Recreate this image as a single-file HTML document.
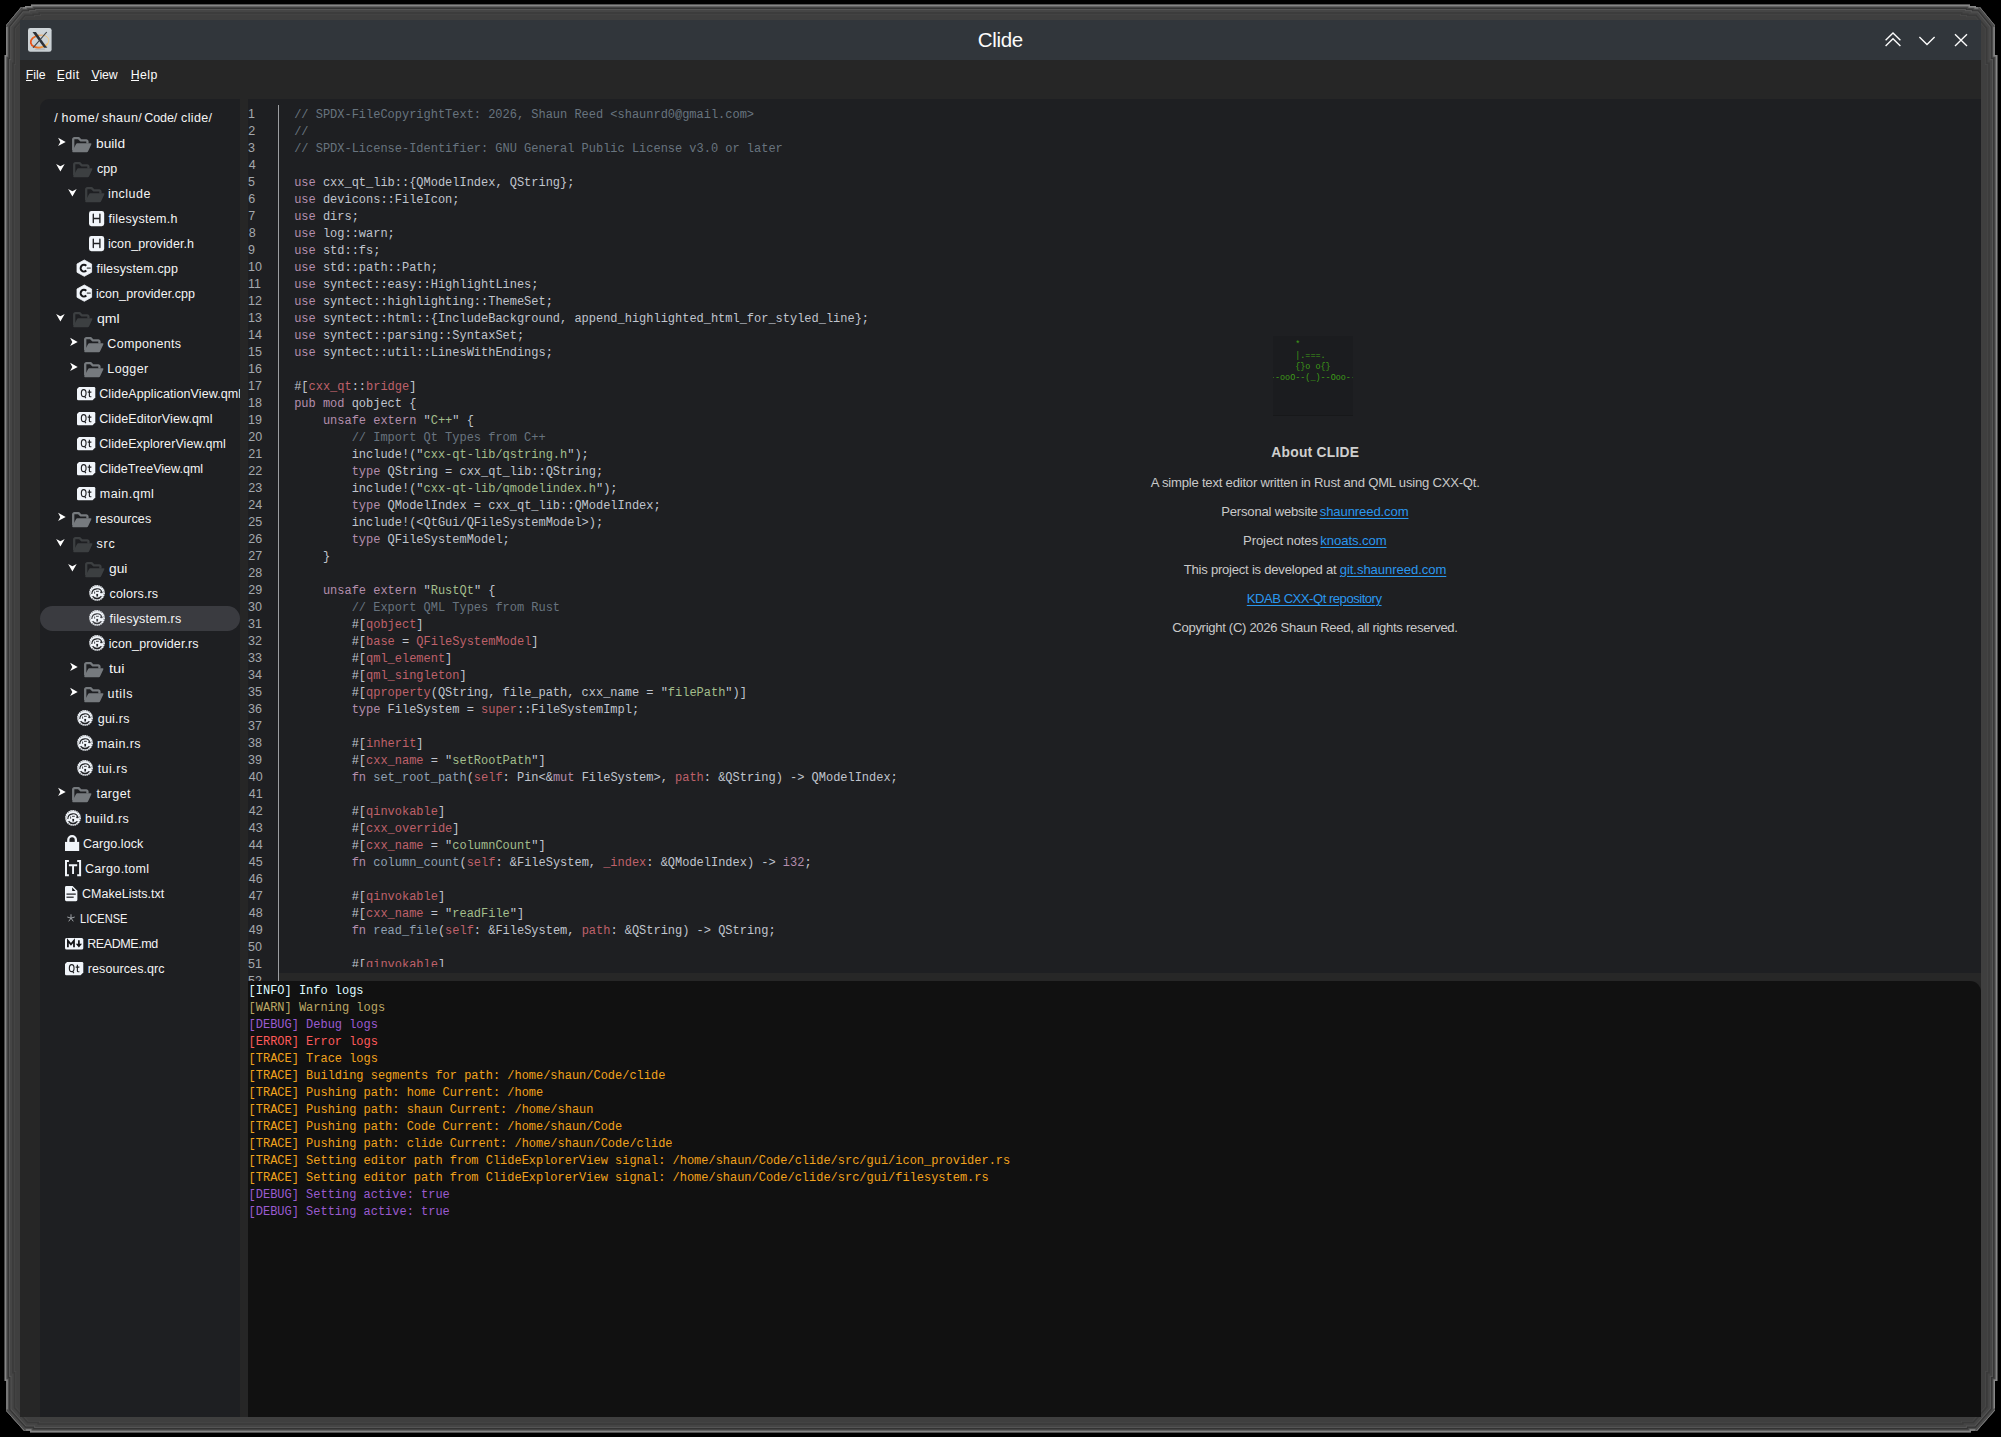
<!DOCTYPE html><html><head><meta charset="utf-8"><title>Clide</title><style>

html,body{margin:0;padding:0;background:#000;}
body{width:2001px;height:1437px;overflow:hidden;position:relative;font-family:"Liberation Sans",sans-serif;}
.t{position:absolute;white-space:pre;margin:0;padding:0;}
.s{font-family:"Liberation Sans",sans-serif;}
.m{font-family:"Liberation Mono",monospace;}
svg{position:absolute;overflow:visible;}
.k{color:#b48ead}.c{color:#68747f}.r{color:#bf616a}.g{color:#a3be8c}.f{color:#8fa1b3}
a{color:inherit}

</style></head><body>
<svg style="left:0;top:0" width="2001" height="1437" viewBox="0 0 2001 1437">
<defs><clipPath id="fc"><polygon points="31,4.8 1970,4.8 1970,6 1976,6 1976,7.2 1980,7.2 1994.8,25.2 1994.8,55 1997.2,55 1997.2,1381 1995,1381 1995,1410.2 1977,1430.7 1971,1430.7 1971,1432.2 30,1432.2 30,1430.7 24,1430.7 6.3,1411 6.3,1381 4.8,1381 4.8,55 6.1,55 6.1,25.2 21,7.2 25,7.2 25,6 31,6"/></clipPath></defs>
<g clip-path="url(#fc)"><polygon points="31,4.8 1970,4.8 1970,6 1976,6 1976,7.2 1980,7.2 1994.8,25.2 1994.8,55 1997.2,55 1997.2,1381 1995,1381 1995,1410.2 1977,1430.7 1971,1430.7 1971,1432.2 30,1432.2 30,1430.7 24,1430.7 6.3,1411 6.3,1381 4.8,1381 4.8,55 6.1,55 6.1,25.2 21,7.2 25,7.2 25,6 31,6" fill="#3f3f3f"/><polygon points="31,4.8 1970,4.8 1970,6 1976,6 1976,7.2 1980,7.2 1994.8,25.2 1994.8,55 1997.2,55 1997.2,1381 1995,1381 1995,1410.2 1977,1430.7 1971,1430.7 1971,1432.2 30,1432.2 30,1430.7 24,1430.7 6.3,1411 6.3,1381 4.8,1381 4.8,55 6.1,55 6.1,25.2 21,7.2 25,7.2 25,6 31,6" fill="none" stroke="#464646" stroke-width="20" stroke-linejoin="miter"/><polygon points="31,4.8 1970,4.8 1970,6 1976,6 1976,7.2 1980,7.2 1994.8,25.2 1994.8,55 1997.2,55 1997.2,1381 1995,1381 1995,1410.2 1977,1430.7 1971,1430.7 1971,1432.2 30,1432.2 30,1430.7 24,1430.7 6.3,1411 6.3,1381 4.8,1381 4.8,55 6.1,55 6.1,25.2 21,7.2 25,7.2 25,6 31,6" fill="none" stroke="#3a3a3a" stroke-width="18" stroke-linejoin="miter"/><polygon points="31,4.8 1970,4.8 1970,6 1976,6 1976,7.2 1980,7.2 1994.8,25.2 1994.8,55 1997.2,55 1997.2,1381 1995,1381 1995,1410.2 1977,1430.7 1971,1430.7 1971,1432.2 30,1432.2 30,1430.7 24,1430.7 6.3,1411 6.3,1381 4.8,1381 4.8,55 6.1,55 6.1,25.2 21,7.2 25,7.2 25,6 31,6" fill="none" stroke="#454545" stroke-width="14.8" stroke-linejoin="miter"/><polygon points="31,4.8 1970,4.8 1970,6 1976,6 1976,7.2 1980,7.2 1994.8,25.2 1994.8,55 1997.2,55 1997.2,1381 1995,1381 1995,1410.2 1977,1430.7 1971,1430.7 1971,1432.2 30,1432.2 30,1430.7 24,1430.7 6.3,1411 6.3,1381 4.8,1381 4.8,55 6.1,55 6.1,25.2 21,7.2 25,7.2 25,6 31,6" fill="none" stroke="#545454" stroke-width="10.4" stroke-linejoin="miter"/><polygon points="31,4.8 1970,4.8 1970,6 1976,6 1976,7.2 1980,7.2 1994.8,25.2 1994.8,55 1997.2,55 1997.2,1381 1995,1381 1995,1410.2 1977,1430.7 1971,1430.7 1971,1432.2 30,1432.2 30,1430.7 24,1430.7 6.3,1411 6.3,1381 4.8,1381 4.8,55 6.1,55 6.1,25.2 21,7.2 25,7.2 25,6 31,6" fill="none" stroke="#333333" stroke-width="8.2" stroke-linejoin="miter"/><polygon points="31,4.8 1970,4.8 1970,6 1976,6 1976,7.2 1980,7.2 1994.8,25.2 1994.8,55 1997.2,55 1997.2,1381 1995,1381 1995,1410.2 1977,1430.7 1971,1430.7 1971,1432.2 30,1432.2 30,1430.7 24,1430.7 6.3,1411 6.3,1381 4.8,1381 4.8,55 6.1,55 6.1,25.2 21,7.2 25,7.2 25,6 31,6" fill="none" stroke="#3f3f3f" stroke-width="6.6" stroke-linejoin="miter"/><polygon points="31,4.8 1970,4.8 1970,6 1976,6 1976,7.2 1980,7.2 1994.8,25.2 1994.8,55 1997.2,55 1997.2,1381 1995,1381 1995,1410.2 1977,1430.7 1971,1430.7 1971,1432.2 30,1432.2 30,1430.7 24,1430.7 6.3,1411 6.3,1381 4.8,1381 4.8,55 6.1,55 6.1,25.2 21,7.2 25,7.2 25,6 31,6" fill="none" stroke="#4b4b4b" stroke-width="5.2" stroke-linejoin="miter"/><polygon points="31,4.8 1970,4.8 1970,6 1976,6 1976,7.2 1980,7.2 1994.8,25.2 1994.8,55 1997.2,55 1997.2,1381 1995,1381 1995,1410.2 1977,1430.7 1971,1430.7 1971,1432.2 30,1432.2 30,1430.7 24,1430.7 6.3,1411 6.3,1381 4.8,1381 4.8,55 6.1,55 6.1,25.2 21,7.2 25,7.2 25,6 31,6" fill="none" stroke="#585858" stroke-width="4" stroke-linejoin="miter"/><polygon points="31,4.8 1970,4.8 1970,6 1976,6 1976,7.2 1980,7.2 1994.8,25.2 1994.8,55 1997.2,55 1997.2,1381 1995,1381 1995,1410.2 1977,1430.7 1971,1430.7 1971,1432.2 30,1432.2 30,1430.7 24,1430.7 6.3,1411 6.3,1381 4.8,1381 4.8,55 6.1,55 6.1,25.2 21,7.2 25,7.2 25,6 31,6" fill="none" stroke="#868686" stroke-width="2.8" stroke-linejoin="miter"/><path d="M6.43 26.77 L22.60 7.23" stroke="#4a4a4a" stroke-width="1.5" fill="none"/><path d="M1978.40 7.22 L1994.47 26.77" stroke="#4a4a4a" stroke-width="1.5" fill="none"/><path d="M1994.72 1408.62 L1975.40 1430.63" stroke="#4a4a4a" stroke-width="1.5" fill="none"/><path d="M25.60 1430.61 L6.56 1409.42" stroke="#4a4a4a" stroke-width="1.5" fill="none"/></g>
</svg>
<div style="position:absolute;left:20px;top:20px;width:1961px;height:40px;background:#31363b;"></div>
<div style="position:absolute;left:20px;top:60px;width:1961px;height:1357px;background:#262626;"></div>
<div style="position:absolute;left:40px;top:99px;width:200px;height:1318px;background:#1e1f22;border-top-left-radius:9px;"></div>
<div style="position:absolute;left:248px;top:99px;width:1733px;height:882px;background:#1e1f22;"></div>
<div style="position:absolute;left:279.4px;top:973px;width:1701.6px;height:8px;background:#272727;"></div>
<div style="position:absolute;left:248px;top:981px;width:1733px;height:436px;background:#111111;border-top-right-radius:11px;"></div>
<div style="position:absolute;left:277.9px;top:105px;width:1.3px;height:876px;background:#9c9ea1;"></div>
<svg style="left:28.2px;top:28.1px" width="23.6" height="23.8" viewBox="0 0 23.6 23.8">
<defs><linearGradient id="og" x1="0" y1="0" x2="1" y2="0"><stop offset="0" stop-color="#e84e18"/><stop offset="0.5" stop-color="#f0882e"/><stop offset="1" stop-color="#f6cc7a"/></linearGradient>
<linearGradient id="ib" x1="0" y1="0" x2="0" y2="1"><stop offset="0" stop-color="#cfd6da"/><stop offset="1" stop-color="#c7ced2"/></linearGradient></defs>
<rect x="0" y="0" width="23.6" height="23.8" rx="2.3" fill="url(#ib)"/>
<ellipse cx="12" cy="21.2" rx="5.2" ry="0.9" fill="#9aa0a4" opacity=".45"/>
<g transform="rotate(-10 11.8 13.3)">
<ellipse cx="11.8" cy="13.3" rx="9.2" ry="6.1" fill="none" stroke="url(#og)" stroke-width="0.8"/>
<path d="M11.8 7.2 A9.2 6.1 0 0 0 11.8 19.4 A9.2 6.1 0 0 0 19.6 16.5" fill="none" stroke="url(#og)" stroke-width="1.7"/>
</g>
<path d="M4.5 4.1 L7.9 4.1 L18.9 19.5 L15.9 19.5z" fill="#2d3136"/>
<path d="M15.9 19.5 L18.9 19.5 L19.4 19.0 L17.0 18.6z" fill="#2d3136"/>
<path d="M18.3 3.8 L19.2 4.3 L5.6 19.9 L4.6 19.4z" fill="#3a3f44"/>
</svg>
<div class="t s" id="t0" style="left:977.74px;top:24.00px;font-size:20.5px;line-height:31px;color:#fcfcfc;letter-spacing:-0.314px;">Clide</div>
<svg style="left:1880px;top:26px" width="96" height="28" viewBox="1880 26 96 28" fill="none" stroke="#fcfcfc" stroke-width="1.35" stroke-linecap="butt" stroke-linejoin="miter">
<path d="M1885.6 40.3 L1893 32.9 L1900.4 40.3"/>
<path d="M1885.6 46.1 L1893 38.7 L1900.4 46.1"/>
<path d="M1919.4 36.9 L1927 44.5 L1934.6 36.9"/>
<path d="M1955 34.3 L1967 46.1 M1967 34.3 L1955 46.1"/>
</svg>
<div class="t s" id="t1" style="left:25.63px;top:66.00px;font-size:12.3px;line-height:18px;color:#fcfcfc;letter-spacing:0.042px;">File</div>
<div style="position:absolute;left:26px;top:80.2px;width:6px;height:1px;background:#fcfcfc;"></div>
<div class="t s" id="t2" style="left:56.63px;top:66.00px;font-size:12.3px;line-height:18px;color:#fcfcfc;letter-spacing:0.435px;">Edit</div>
<div style="position:absolute;left:57px;top:80.2px;width:6.6px;height:1px;background:#fcfcfc;"></div>
<div class="t s" id="t3" style="left:91.56px;top:66.00px;font-size:12.3px;line-height:18px;color:#fcfcfc;letter-spacing:-0.076px;">View</div>
<div style="position:absolute;left:91.2px;top:80.2px;width:7.2px;height:1px;background:#fcfcfc;"></div>
<div class="t s" id="t4" style="left:130.63px;top:66.00px;font-size:12.3px;line-height:18px;color:#fcfcfc;letter-spacing:0.508px;">Help</div>
<div style="position:absolute;left:131px;top:80.2px;width:8.4px;height:1px;background:#fcfcfc;"></div>
<div style="position:absolute;left:40px;top:605.6px;width:200px;height:25.2px;background:#3a3b40;border-radius:12.6px;"></div>
<div class="t s" id="t5" style="left:54.23px;top:109.00px;font-size:12.5px;line-height:19px;color:#f4f4f4;">/</div>
<div class="t s" id="t6" style="left:61.57px;top:109.00px;font-size:12.5px;line-height:19px;color:#f4f4f4;letter-spacing:0.592px;">home/</div>
<div class="t s" id="t7" style="left:101.99px;top:109.00px;font-size:12.5px;line-height:19px;color:#f4f4f4;letter-spacing:0.452px;">shaun/</div>
<div class="t s" id="t8" style="left:144.35px;top:109.00px;font-size:12.5px;line-height:19px;color:#f4f4f4;letter-spacing:-0.100px;">Code/</div>
<div class="t s" id="t9" style="left:181.10px;top:109.00px;font-size:12.5px;line-height:19px;color:#f4f4f4;letter-spacing:0.349px;">clide/</div>
<div style="position:absolute;left:40px;top:99px;width:200px;height:1318px;overflow:hidden">
<div style="position:absolute;left:-40px;top:-99px;width:400px;height:1437px">
<svg style="left:57.5px;top:137.2px" width="9" height="10" viewBox="0 0 9 10"><path d="M0.1 0.7 L7.7 4.9 L0.1 9.1 L2.3 4.9z" fill="#fff"/></svg>
<svg style="left:71.9px;top:136.5px" width="19.6" height="15.3" viewBox="0 0 19.6 15.3"><path d="M1.2 13.6 V2.3 a1.15 1.15 0 0 1 1.15 -1.15 H6.6 L8.9 3.45 H14.3 a1.15 1.15 0 0 1 1.15 1.15 V6.4" fill="none" stroke="#767a7e" stroke-width="2.3" stroke-linejoin="round"/><path d="M5.3 6.3 H18.5 a.9 .9 0 0 1 .8 1.3 L16 14.4 a1.4 1.4 0 0 1 -1.2 .8 H1.2 a.9 .9 0 0 1 -.8 -1.3 L4.1 7.1 a1.4 1.4 0 0 1 1.2 -.8z" fill="#767a7e"/></svg>
<div class="t s" id="t10" style="left:96.12px;top:135.00px;font-size:12.5px;line-height:19px;color:#f4f4f4;transform:scaleX(1.0987);transform-origin:0 0;">build</div>
<svg style="left:56.4px;top:162.5px" width="10" height="10" viewBox="0 0 10 10"><path d="M0.1 1.0 L4.4 3.3 L8.7 1.0 L4.4 8.4z" fill="#fff"/></svg>
<svg style="left:72.9px;top:161.5px" width="19.6" height="15.3" viewBox="0 0 19.6 15.3"><path d="M1.2 13.6 V2.3 a1.15 1.15 0 0 1 1.15 -1.15 H6.6 L8.9 3.45 H14.3 a1.15 1.15 0 0 1 1.15 1.15 V6.4" fill="none" stroke="#3c3f41" stroke-width="2.3" stroke-linejoin="round"/><path d="M5.3 6.3 H18.5 a.9 .9 0 0 1 .8 1.3 L16 14.4 a1.4 1.4 0 0 1 -1.2 .8 H1.2 a.9 .9 0 0 1 -.8 -1.3 L4.1 7.1 a1.4 1.4 0 0 1 1.2 -.8z" fill="#3c3f41"/></svg>
<div class="t s" id="t11" style="left:96.98px;top:160.00px;font-size:12.5px;line-height:19px;color:#f4f4f4;letter-spacing:0.043px;">cpp</div>
<svg style="left:68.4px;top:187.5px" width="10" height="10" viewBox="0 0 10 10"><path d="M0.1 1.0 L4.4 3.3 L8.7 1.0 L4.4 8.4z" fill="#fff"/></svg>
<svg style="left:84.9px;top:186.5px" width="19.6" height="15.3" viewBox="0 0 19.6 15.3"><path d="M1.2 13.6 V2.3 a1.15 1.15 0 0 1 1.15 -1.15 H6.6 L8.9 3.45 H14.3 a1.15 1.15 0 0 1 1.15 1.15 V6.4" fill="none" stroke="#3c3f41" stroke-width="2.3" stroke-linejoin="round"/><path d="M5.3 6.3 H18.5 a.9 .9 0 0 1 .8 1.3 L16 14.4 a1.4 1.4 0 0 1 -1.2 .8 H1.2 a.9 .9 0 0 1 -.8 -1.3 L4.1 7.1 a1.4 1.4 0 0 1 1.2 -.8z" fill="#3c3f41"/></svg>
<div class="t s" id="t12" style="left:107.90px;top:185.00px;font-size:12.5px;line-height:19px;color:#f4f4f4;letter-spacing:0.492px;">include</div>
<svg style="left:88.8px;top:210.9px" width="15.2" height="15.2" viewBox="0 0 15.2 15.2"><rect x="0" y="0" width="15.2" height="15.2" rx="2.4" fill="#f1f5fa"/><path d="M4.3 3.2 V11.6 M10.9 3.2 V11.6 M4.3 7.5 H10.9" stroke="#1e1f22" stroke-width="1.35" fill="none" stroke-linecap="round"/></svg>
<div class="t s" id="t13" style="left:108.60px;top:210.00px;font-size:12.5px;line-height:19px;color:#f4f4f4;letter-spacing:0.251px;">filesystem.h</div>
<svg style="left:88.8px;top:235.9px" width="15.2" height="15.2" viewBox="0 0 15.2 15.2"><rect x="0" y="0" width="15.2" height="15.2" rx="2.4" fill="#f1f5fa"/><path d="M4.3 3.2 V11.6 M10.9 3.2 V11.6 M4.3 7.5 H10.9" stroke="#1e1f22" stroke-width="1.35" fill="none" stroke-linecap="round"/></svg>
<div class="t s" id="t14" style="left:107.90px;top:235.00px;font-size:12.5px;line-height:19px;color:#f4f4f4;letter-spacing:0.098px;">icon_provider.h</div>
<svg style="left:76.9px;top:259.9px" width="14.6" height="16.3" viewBox="0 0 14.6 16.3"><path d="M7.3 0 L14.6 4 L14.6 12.3 L7.3 16.3 L0 12.3 L0 4z" fill="#f1f5fa" stroke="#f1f5fa" stroke-width=".8" stroke-linejoin="round"/><path d="M9.3 5.75 A3.35 3.35 0 1 0 9.3 10.55" fill="none" stroke="#16171a" stroke-width="1.95"/><path d="M9.8 8.15 H13.7" stroke="#2a2b2e" stroke-width=".9" fill="none"/><path d="M11.0 7.2 V9.1 M12.9 7.4 V8.9" stroke="#55575c" stroke-width=".7" fill="none"/></svg>
<div class="t s" id="t15" style="left:96.60px;top:260.00px;font-size:12.5px;line-height:19px;color:#f4f4f4;letter-spacing:0.163px;">filesystem.cpp</div>
<svg style="left:76.9px;top:284.9px" width="14.6" height="16.3" viewBox="0 0 14.6 16.3"><path d="M7.3 0 L14.6 4 L14.6 12.3 L7.3 16.3 L0 12.3 L0 4z" fill="#f1f5fa" stroke="#f1f5fa" stroke-width=".8" stroke-linejoin="round"/><path d="M9.3 5.75 A3.35 3.35 0 1 0 9.3 10.55" fill="none" stroke="#16171a" stroke-width="1.95"/><path d="M9.8 8.15 H13.7" stroke="#2a2b2e" stroke-width=".9" fill="none"/><path d="M11.0 7.2 V9.1 M12.9 7.4 V8.9" stroke="#55575c" stroke-width=".7" fill="none"/></svg>
<div class="t s" id="t16" style="left:95.90px;top:285.00px;font-size:12.5px;line-height:19px;color:#f4f4f4;letter-spacing:0.075px;">icon_provider.cpp</div>
<svg style="left:56.4px;top:312.5px" width="10" height="10" viewBox="0 0 10 10"><path d="M0.1 1.0 L4.4 3.3 L8.7 1.0 L4.4 8.4z" fill="#fff"/></svg>
<svg style="left:72.9px;top:311.5px" width="19.6" height="15.3" viewBox="0 0 19.6 15.3"><path d="M1.2 13.6 V2.3 a1.15 1.15 0 0 1 1.15 -1.15 H6.6 L8.9 3.45 H14.3 a1.15 1.15 0 0 1 1.15 1.15 V6.4" fill="none" stroke="#3c3f41" stroke-width="2.3" stroke-linejoin="round"/><path d="M5.3 6.3 H18.5 a.9 .9 0 0 1 .8 1.3 L16 14.4 a1.4 1.4 0 0 1 -1.2 .8 H1.2 a.9 .9 0 0 1 -.8 -1.3 L4.1 7.1 a1.4 1.4 0 0 1 1.2 -.8z" fill="#3c3f41"/></svg>
<div class="t s" id="t17" style="left:96.78px;top:310.00px;font-size:12.5px;line-height:19px;color:#f4f4f4;transform:scaleX(1.1252);transform-origin:0 0;">qml</div>
<svg style="left:69.5px;top:337.2px" width="9" height="10" viewBox="0 0 9 10"><path d="M0.1 0.7 L7.7 4.9 L0.1 9.1 L2.3 4.9z" fill="#fff"/></svg>
<svg style="left:83.9px;top:336.5px" width="19.6" height="15.3" viewBox="0 0 19.6 15.3"><path d="M1.2 13.6 V2.3 a1.15 1.15 0 0 1 1.15 -1.15 H6.6 L8.9 3.45 H14.3 a1.15 1.15 0 0 1 1.15 1.15 V6.4" fill="none" stroke="#767a7e" stroke-width="2.3" stroke-linejoin="round"/><path d="M5.3 6.3 H18.5 a.9 .9 0 0 1 .8 1.3 L16 14.4 a1.4 1.4 0 0 1 -1.2 .8 H1.2 a.9 .9 0 0 1 -.8 -1.3 L4.1 7.1 a1.4 1.4 0 0 1 1.2 -.8z" fill="#767a7e"/></svg>
<div class="t s" id="t18" style="left:107.35px;top:335.00px;font-size:12.5px;line-height:19px;color:#f4f4f4;letter-spacing:0.306px;">Components</div>
<svg style="left:69.5px;top:362.2px" width="9" height="10" viewBox="0 0 9 10"><path d="M0.1 0.7 L7.7 4.9 L0.1 9.1 L2.3 4.9z" fill="#fff"/></svg>
<svg style="left:83.9px;top:361.5px" width="19.6" height="15.3" viewBox="0 0 19.6 15.3"><path d="M1.2 13.6 V2.3 a1.15 1.15 0 0 1 1.15 -1.15 H6.6 L8.9 3.45 H14.3 a1.15 1.15 0 0 1 1.15 1.15 V6.4" fill="none" stroke="#767a7e" stroke-width="2.3" stroke-linejoin="round"/><path d="M5.3 6.3 H18.5 a.9 .9 0 0 1 .8 1.3 L16 14.4 a1.4 1.4 0 0 1 -1.2 .8 H1.2 a.9 .9 0 0 1 -.8 -1.3 L4.1 7.1 a1.4 1.4 0 0 1 1.2 -.8z" fill="#767a7e"/></svg>
<div class="t s" id="t19" style="left:107.35px;top:360.00px;font-size:12.5px;line-height:19px;color:#f4f4f4;letter-spacing:0.385px;">Logger</div>
<svg style="left:76.9px;top:387.2px" width="18.3" height="13.2" viewBox="0 0 18.3 13.2"><path d="M2 0 H17 a1.3 1.3 0 0 1 1.3 1.3 V10.6 L15.6 13.2 H1.3 a1.3 1.3 0 0 1 -1.3 -1.3 V2z" fill="#f1f5fa"/><ellipse cx="6.7" cy="6.2" rx="2.35" ry="3.5" fill="none" stroke="#202124" stroke-width="1.15"/><path d="M7.3 9.2 L8.9 11.2" stroke="#202124" stroke-width="1.15" fill="none"/><path d="M12.4 2.8 V8.9 a.9 .9 0 0 0 .9 .9 H14.4 M10.7 5.1 H14.4" stroke="#202124" stroke-width="1.15" fill="none"/></svg>
<div class="t s" id="t20" style="left:99.21px;top:385.00px;font-size:12.5px;line-height:19px;color:#f4f4f4;letter-spacing:0.106px;">ClideApplicationView.qml</div>
<svg style="left:76.9px;top:412.2px" width="18.3" height="13.2" viewBox="0 0 18.3 13.2"><path d="M2 0 H17 a1.3 1.3 0 0 1 1.3 1.3 V10.6 L15.6 13.2 H1.3 a1.3 1.3 0 0 1 -1.3 -1.3 V2z" fill="#f1f5fa"/><ellipse cx="6.7" cy="6.2" rx="2.35" ry="3.5" fill="none" stroke="#202124" stroke-width="1.15"/><path d="M7.3 9.2 L8.9 11.2" stroke="#202124" stroke-width="1.15" fill="none"/><path d="M12.4 2.8 V8.9 a.9 .9 0 0 0 .9 .9 H14.4 M10.7 5.1 H14.4" stroke="#202124" stroke-width="1.15" fill="none"/></svg>
<div class="t s" id="t21" style="left:99.21px;top:410.00px;font-size:12.5px;line-height:19px;color:#f4f4f4;letter-spacing:0.127px;">ClideEditorView.qml</div>
<svg style="left:76.9px;top:437.2px" width="18.3" height="13.2" viewBox="0 0 18.3 13.2"><path d="M2 0 H17 a1.3 1.3 0 0 1 1.3 1.3 V10.6 L15.6 13.2 H1.3 a1.3 1.3 0 0 1 -1.3 -1.3 V2z" fill="#f1f5fa"/><ellipse cx="6.7" cy="6.2" rx="2.35" ry="3.5" fill="none" stroke="#202124" stroke-width="1.15"/><path d="M7.3 9.2 L8.9 11.2" stroke="#202124" stroke-width="1.15" fill="none"/><path d="M12.4 2.8 V8.9 a.9 .9 0 0 0 .9 .9 H14.4 M10.7 5.1 H14.4" stroke="#202124" stroke-width="1.15" fill="none"/></svg>
<div class="t s" id="t22" style="left:99.21px;top:435.00px;font-size:12.5px;line-height:19px;color:#f4f4f4;letter-spacing:0.089px;">ClideExplorerView.qml</div>
<svg style="left:76.9px;top:462.2px" width="18.3" height="13.2" viewBox="0 0 18.3 13.2"><path d="M2 0 H17 a1.3 1.3 0 0 1 1.3 1.3 V10.6 L15.6 13.2 H1.3 a1.3 1.3 0 0 1 -1.3 -1.3 V2z" fill="#f1f5fa"/><ellipse cx="6.7" cy="6.2" rx="2.35" ry="3.5" fill="none" stroke="#202124" stroke-width="1.15"/><path d="M7.3 9.2 L8.9 11.2" stroke="#202124" stroke-width="1.15" fill="none"/><path d="M12.4 2.8 V8.9 a.9 .9 0 0 0 .9 .9 H14.4 M10.7 5.1 H14.4" stroke="#202124" stroke-width="1.15" fill="none"/></svg>
<div class="t s" id="t23" style="left:99.21px;top:460.00px;font-size:12.5px;line-height:19px;color:#f4f4f4;letter-spacing:0.027px;">ClideTreeView.qml</div>
<svg style="left:76.9px;top:487.2px" width="18.3" height="13.2" viewBox="0 0 18.3 13.2"><path d="M2 0 H17 a1.3 1.3 0 0 1 1.3 1.3 V10.6 L15.6 13.2 H1.3 a1.3 1.3 0 0 1 -1.3 -1.3 V2z" fill="#f1f5fa"/><ellipse cx="6.7" cy="6.2" rx="2.35" ry="3.5" fill="none" stroke="#202124" stroke-width="1.15"/><path d="M7.3 9.2 L8.9 11.2" stroke="#202124" stroke-width="1.15" fill="none"/><path d="M12.4 2.8 V8.9 a.9 .9 0 0 0 .9 .9 H14.4 M10.7 5.1 H14.4" stroke="#202124" stroke-width="1.15" fill="none"/></svg>
<div class="t s" id="t24" style="left:99.74px;top:485.00px;font-size:12.5px;line-height:19px;color:#f4f4f4;letter-spacing:0.482px;">main.qml</div>
<svg style="left:57.5px;top:512.2px" width="9" height="10" viewBox="0 0 9 10"><path d="M0.1 0.7 L7.7 4.9 L0.1 9.1 L2.3 4.9z" fill="#fff"/></svg>
<svg style="left:71.9px;top:511.5px" width="19.6" height="15.3" viewBox="0 0 19.6 15.3"><path d="M1.2 13.6 V2.3 a1.15 1.15 0 0 1 1.15 -1.15 H6.6 L8.9 3.45 H14.3 a1.15 1.15 0 0 1 1.15 1.15 V6.4" fill="none" stroke="#767a7e" stroke-width="2.3" stroke-linejoin="round"/><path d="M5.3 6.3 H18.5 a.9 .9 0 0 1 .8 1.3 L16 14.4 a1.4 1.4 0 0 1 -1.2 .8 H1.2 a.9 .9 0 0 1 -.8 -1.3 L4.1 7.1 a1.4 1.4 0 0 1 1.2 -.8z" fill="#767a7e"/></svg>
<div class="t s" id="t25" style="left:95.56px;top:510.00px;font-size:12.5px;line-height:19px;color:#f4f4f4;letter-spacing:0.087px;">resources</div>
<svg style="left:56.4px;top:537.5px" width="10" height="10" viewBox="0 0 10 10"><path d="M0.1 1.0 L4.4 3.3 L8.7 1.0 L4.4 8.4z" fill="#fff"/></svg>
<svg style="left:72.9px;top:536.5px" width="19.6" height="15.3" viewBox="0 0 19.6 15.3"><path d="M1.2 13.6 V2.3 a1.15 1.15 0 0 1 1.15 -1.15 H6.6 L8.9 3.45 H14.3 a1.15 1.15 0 0 1 1.15 1.15 V6.4" fill="none" stroke="#3c3f41" stroke-width="2.3" stroke-linejoin="round"/><path d="M5.3 6.3 H18.5 a.9 .9 0 0 1 .8 1.3 L16 14.4 a1.4 1.4 0 0 1 -1.2 .8 H1.2 a.9 .9 0 0 1 -.8 -1.3 L4.1 7.1 a1.4 1.4 0 0 1 1.2 -.8z" fill="#3c3f41"/></svg>
<div class="t s" id="t26" style="left:96.49px;top:535.00px;font-size:12.5px;line-height:19px;color:#f4f4f4;letter-spacing:0.751px;">src</div>
<svg style="left:68.4px;top:562.5px" width="10" height="10" viewBox="0 0 10 10"><path d="M0.1 1.0 L4.4 3.3 L8.7 1.0 L4.4 8.4z" fill="#fff"/></svg>
<svg style="left:84.9px;top:561.5px" width="19.6" height="15.3" viewBox="0 0 19.6 15.3"><path d="M1.2 13.6 V2.3 a1.15 1.15 0 0 1 1.15 -1.15 H6.6 L8.9 3.45 H14.3 a1.15 1.15 0 0 1 1.15 1.15 V6.4" fill="none" stroke="#3c3f41" stroke-width="2.3" stroke-linejoin="round"/><path d="M5.3 6.3 H18.5 a.9 .9 0 0 1 .8 1.3 L16 14.4 a1.4 1.4 0 0 1 -1.2 .8 H1.2 a.9 .9 0 0 1 -.8 -1.3 L4.1 7.1 a1.4 1.4 0 0 1 1.2 -.8z" fill="#3c3f41"/></svg>
<div class="t s" id="t27" style="left:109.15px;top:560.00px;font-size:12.5px;line-height:19px;color:#f4f4f4;transform:scaleX(1.1014);transform-origin:0 0;">gui</div>
<svg style="left:89px;top:585.4px" width="16" height="15.8" viewBox="0 0 16 15.8"><circle cx="8" cy="7.9" r="7.15" fill="none" stroke="#f1f5fa" stroke-width="1.5" stroke-dasharray="1.55 0.5"/><circle cx="8" cy="7.9" r="6.85" fill="#f1f5fa"/><path d="M2.8 8.9 A5.25 5.25 0 0 1 13.2 8.1" fill="none" stroke="#1e1f22" stroke-width="1.05"/><path d="M3.7 11.1 A5.1 5.1 0 0 0 12.3 11.1" fill="none" stroke="#1e1f22" stroke-width="1.5"/><rect x="5.1" y="6.5" width="1.0" height="2.2" fill="#1e1f22" opacity=".8"/><rect x="7.0" y="5.85" width="2.8" height=".85" fill="#1e1f22"/><rect x="11.3" y="6.4" width="1.5" height="1.7" fill="#1e1f22"/><rect x="7.3" y="8.9" width="1.8" height="2.6" fill="#1e1f22"/><rect x="4.3" y="10.3" width="2.9" height=".9" fill="#f1f5fa"/><rect x="9.3" y="10.3" width="3.0" height=".9" fill="#f1f5fa"/></svg>
<div class="t s" id="t28" style="left:109.57px;top:585.00px;font-size:12.5px;line-height:19px;color:#f4f4f4;letter-spacing:0.163px;">colors.rs</div>
<svg style="left:89px;top:610.4px" width="16" height="15.8" viewBox="0 0 16 15.8"><circle cx="8" cy="7.9" r="7.15" fill="none" stroke="#f1f5fa" stroke-width="1.5" stroke-dasharray="1.55 0.5"/><circle cx="8" cy="7.9" r="6.85" fill="#f1f5fa"/><path d="M2.8 8.9 A5.25 5.25 0 0 1 13.2 8.1" fill="none" stroke="#3a3b40" stroke-width="1.05"/><path d="M3.7 11.1 A5.1 5.1 0 0 0 12.3 11.1" fill="none" stroke="#3a3b40" stroke-width="1.5"/><rect x="5.1" y="6.5" width="1.0" height="2.2" fill="#3a3b40" opacity=".8"/><rect x="7.0" y="5.85" width="2.8" height=".85" fill="#3a3b40"/><rect x="11.3" y="6.4" width="1.5" height="1.7" fill="#3a3b40"/><rect x="7.3" y="8.9" width="1.8" height="2.6" fill="#3a3b40"/><rect x="4.3" y="10.3" width="2.9" height=".9" fill="#f1f5fa"/><rect x="9.3" y="10.3" width="3.0" height=".9" fill="#f1f5fa"/></svg>
<div class="t s" id="t29" style="left:109.53px;top:610.00px;font-size:12.5px;line-height:19px;color:#f4f4f4;letter-spacing:0.185px;">filesystem.rs</div>
<svg style="left:89px;top:635.4px" width="16" height="15.8" viewBox="0 0 16 15.8"><circle cx="8" cy="7.9" r="7.15" fill="none" stroke="#f1f5fa" stroke-width="1.5" stroke-dasharray="1.55 0.5"/><circle cx="8" cy="7.9" r="6.85" fill="#f1f5fa"/><path d="M2.8 8.9 A5.25 5.25 0 0 1 13.2 8.1" fill="none" stroke="#1e1f22" stroke-width="1.05"/><path d="M3.7 11.1 A5.1 5.1 0 0 0 12.3 11.1" fill="none" stroke="#1e1f22" stroke-width="1.5"/><rect x="5.1" y="6.5" width="1.0" height="2.2" fill="#1e1f22" opacity=".8"/><rect x="7.0" y="5.85" width="2.8" height=".85" fill="#1e1f22"/><rect x="11.3" y="6.4" width="1.5" height="1.7" fill="#1e1f22"/><rect x="7.3" y="8.9" width="1.8" height="2.6" fill="#1e1f22"/><rect x="4.3" y="10.3" width="2.9" height=".9" fill="#f1f5fa"/><rect x="9.3" y="10.3" width="3.0" height=".9" fill="#f1f5fa"/></svg>
<div class="t s" id="t30" style="left:108.74px;top:635.00px;font-size:12.5px;line-height:19px;color:#f4f4f4;letter-spacing:0.107px;">icon_provider.rs</div>
<svg style="left:69.5px;top:662.2px" width="9" height="10" viewBox="0 0 9 10"><path d="M0.1 0.7 L7.7 4.9 L0.1 9.1 L2.3 4.9z" fill="#fff"/></svg>
<svg style="left:83.9px;top:661.5px" width="19.6" height="15.3" viewBox="0 0 19.6 15.3"><path d="M1.2 13.6 V2.3 a1.15 1.15 0 0 1 1.15 -1.15 H6.6 L8.9 3.45 H14.3 a1.15 1.15 0 0 1 1.15 1.15 V6.4" fill="none" stroke="#767a7e" stroke-width="2.3" stroke-linejoin="round"/><path d="M5.3 6.3 H18.5 a.9 .9 0 0 1 .8 1.3 L16 14.4 a1.4 1.4 0 0 1 -1.2 .8 H1.2 a.9 .9 0 0 1 -.8 -1.3 L4.1 7.1 a1.4 1.4 0 0 1 1.2 -.8z" fill="#767a7e"/></svg>
<div class="t s" id="t31" style="left:108.60px;top:660.00px;font-size:12.5px;line-height:19px;color:#f4f4f4;transform:scaleX(1.1718);transform-origin:0 0;">tui</div>
<svg style="left:69.5px;top:687.2px" width="9" height="10" viewBox="0 0 9 10"><path d="M0.1 0.7 L7.7 4.9 L0.1 9.1 L2.3 4.9z" fill="#fff"/></svg>
<svg style="left:83.9px;top:686.5px" width="19.6" height="15.3" viewBox="0 0 19.6 15.3"><path d="M1.2 13.6 V2.3 a1.15 1.15 0 0 1 1.15 -1.15 H6.6 L8.9 3.45 H14.3 a1.15 1.15 0 0 1 1.15 1.15 V6.4" fill="none" stroke="#767a7e" stroke-width="2.3" stroke-linejoin="round"/><path d="M5.3 6.3 H18.5 a.9 .9 0 0 1 .8 1.3 L16 14.4 a1.4 1.4 0 0 1 -1.2 .8 H1.2 a.9 .9 0 0 1 -.8 -1.3 L4.1 7.1 a1.4 1.4 0 0 1 1.2 -.8z" fill="#767a7e"/></svg>
<div class="t s" id="t32" style="left:107.57px;top:685.00px;font-size:12.5px;line-height:19px;color:#f4f4f4;letter-spacing:0.679px;">utils</div>
<svg style="left:77px;top:710.4px" width="16" height="15.8" viewBox="0 0 16 15.8"><circle cx="8" cy="7.9" r="7.15" fill="none" stroke="#f1f5fa" stroke-width="1.5" stroke-dasharray="1.55 0.5"/><circle cx="8" cy="7.9" r="6.85" fill="#f1f5fa"/><path d="M2.8 8.9 A5.25 5.25 0 0 1 13.2 8.1" fill="none" stroke="#1e1f22" stroke-width="1.05"/><path d="M3.7 11.1 A5.1 5.1 0 0 0 12.3 11.1" fill="none" stroke="#1e1f22" stroke-width="1.5"/><rect x="5.1" y="6.5" width="1.0" height="2.2" fill="#1e1f22" opacity=".8"/><rect x="7.0" y="5.85" width="2.8" height=".85" fill="#1e1f22"/><rect x="11.3" y="6.4" width="1.5" height="1.7" fill="#1e1f22"/><rect x="7.3" y="8.9" width="1.8" height="2.6" fill="#1e1f22"/><rect x="4.3" y="10.3" width="2.9" height=".9" fill="#f1f5fa"/><rect x="9.3" y="10.3" width="3.0" height=".9" fill="#f1f5fa"/></svg>
<div class="t s" id="t33" style="left:97.70px;top:710.00px;font-size:12.5px;line-height:19px;color:#f4f4f4;letter-spacing:0.239px;">gui.rs</div>
<svg style="left:77px;top:735.4px" width="16" height="15.8" viewBox="0 0 16 15.8"><circle cx="8" cy="7.9" r="7.15" fill="none" stroke="#f1f5fa" stroke-width="1.5" stroke-dasharray="1.55 0.5"/><circle cx="8" cy="7.9" r="6.85" fill="#f1f5fa"/><path d="M2.8 8.9 A5.25 5.25 0 0 1 13.2 8.1" fill="none" stroke="#1e1f22" stroke-width="1.05"/><path d="M3.7 11.1 A5.1 5.1 0 0 0 12.3 11.1" fill="none" stroke="#1e1f22" stroke-width="1.5"/><rect x="5.1" y="6.5" width="1.0" height="2.2" fill="#1e1f22" opacity=".8"/><rect x="7.0" y="5.85" width="2.8" height=".85" fill="#1e1f22"/><rect x="11.3" y="6.4" width="1.5" height="1.7" fill="#1e1f22"/><rect x="7.3" y="8.9" width="1.8" height="2.6" fill="#1e1f22"/><rect x="4.3" y="10.3" width="2.9" height=".9" fill="#f1f5fa"/><rect x="9.3" y="10.3" width="3.0" height=".9" fill="#f1f5fa"/></svg>
<div class="t s" id="t34" style="left:97.02px;top:735.00px;font-size:12.5px;line-height:19px;color:#f4f4f4;letter-spacing:0.429px;">main.rs</div>
<svg style="left:77px;top:760.4px" width="16" height="15.8" viewBox="0 0 16 15.8"><circle cx="8" cy="7.9" r="7.15" fill="none" stroke="#f1f5fa" stroke-width="1.5" stroke-dasharray="1.55 0.5"/><circle cx="8" cy="7.9" r="6.85" fill="#f1f5fa"/><path d="M2.8 8.9 A5.25 5.25 0 0 1 13.2 8.1" fill="none" stroke="#1e1f22" stroke-width="1.05"/><path d="M3.7 11.1 A5.1 5.1 0 0 0 12.3 11.1" fill="none" stroke="#1e1f22" stroke-width="1.5"/><rect x="5.1" y="6.5" width="1.0" height="2.2" fill="#1e1f22" opacity=".8"/><rect x="7.0" y="5.85" width="2.8" height=".85" fill="#1e1f22"/><rect x="11.3" y="6.4" width="1.5" height="1.7" fill="#1e1f22"/><rect x="7.3" y="8.9" width="1.8" height="2.6" fill="#1e1f22"/><rect x="4.3" y="10.3" width="2.9" height=".9" fill="#f1f5fa"/><rect x="9.3" y="10.3" width="3.0" height=".9" fill="#f1f5fa"/></svg>
<div class="t s" id="t35" style="left:97.63px;top:760.00px;font-size:12.5px;line-height:19px;color:#f4f4f4;letter-spacing:0.515px;">tui.rs</div>
<svg style="left:57.5px;top:787.2px" width="9" height="10" viewBox="0 0 9 10"><path d="M0.1 0.7 L7.7 4.9 L0.1 9.1 L2.3 4.9z" fill="#fff"/></svg>
<svg style="left:71.9px;top:786.5px" width="19.6" height="15.3" viewBox="0 0 19.6 15.3"><path d="M1.2 13.6 V2.3 a1.15 1.15 0 0 1 1.15 -1.15 H6.6 L8.9 3.45 H14.3 a1.15 1.15 0 0 1 1.15 1.15 V6.4" fill="none" stroke="#767a7e" stroke-width="2.3" stroke-linejoin="round"/><path d="M5.3 6.3 H18.5 a.9 .9 0 0 1 .8 1.3 L16 14.4 a1.4 1.4 0 0 1 -1.2 .8 H1.2 a.9 .9 0 0 1 -.8 -1.3 L4.1 7.1 a1.4 1.4 0 0 1 1.2 -.8z" fill="#767a7e"/></svg>
<div class="t s" id="t36" style="left:96.54px;top:785.00px;font-size:12.5px;line-height:19px;color:#f4f4f4;letter-spacing:0.399px;">target</div>
<svg style="left:65px;top:810.4px" width="16" height="15.8" viewBox="0 0 16 15.8"><circle cx="8" cy="7.9" r="7.15" fill="none" stroke="#f1f5fa" stroke-width="1.5" stroke-dasharray="1.55 0.5"/><circle cx="8" cy="7.9" r="6.85" fill="#f1f5fa"/><path d="M2.8 8.9 A5.25 5.25 0 0 1 13.2 8.1" fill="none" stroke="#1e1f22" stroke-width="1.05"/><path d="M3.7 11.1 A5.1 5.1 0 0 0 12.3 11.1" fill="none" stroke="#1e1f22" stroke-width="1.5"/><rect x="5.1" y="6.5" width="1.0" height="2.2" fill="#1e1f22" opacity=".8"/><rect x="7.0" y="5.85" width="2.8" height=".85" fill="#1e1f22"/><rect x="11.3" y="6.4" width="1.5" height="1.7" fill="#1e1f22"/><rect x="7.3" y="8.9" width="1.8" height="2.6" fill="#1e1f22"/><rect x="4.3" y="10.3" width="2.9" height=".9" fill="#f1f5fa"/><rect x="9.3" y="10.3" width="3.0" height=".9" fill="#f1f5fa"/></svg>
<div class="t s" id="t37" style="left:85.04px;top:810.00px;font-size:12.5px;line-height:19px;color:#f4f4f4;letter-spacing:0.496px;">build.rs</div>
<svg style="left:64.9px;top:834.8px" width="14.2" height="16" viewBox="0 0 14.2 16"><rect x="0" y="6.9" width="14.2" height="9.1" fill="#f1f5fa"/><path d="M3.3 7.5 V5.0 a3.8 3.8 0 0 1 7.6 0 V7.5" fill="none" stroke="#f1f5fa" stroke-width="2.3"/></svg>
<div class="t s" id="t38" style="left:83.01px;top:835.00px;font-size:12.5px;line-height:19px;color:#f4f4f4;letter-spacing:0.051px;">Cargo.lock</div>
<svg style="left:64.9px;top:860.4px" width="16.2" height="16.2" viewBox="0 0 16.2 16.2"><path d="M3.9 1 H1 V15.2 H3.9 M12.2 1 H15.1 V15.2 H12.2" fill="none" stroke="#f1f5fa" stroke-width="2"/><path d="M3.9 5.2 H12.2 M8.05 5.2 V14" fill="none" stroke="#f1f5fa" stroke-width="1.9"/></svg>
<div class="t s" id="t39" style="left:85.01px;top:860.00px;font-size:12.5px;line-height:19px;color:#f4f4f4;letter-spacing:0.318px;">Cargo.toml</div>
<svg style="left:64.9px;top:885.9px" width="12.4" height="15.2" viewBox="0 0 12.4 15.2"><path d="M1.4 0 H7.6 L12.4 4.8 V13.8 a1.4 1.4 0 0 1 -1.4 1.4 H1.4 a1.4 1.4 0 0 1 -1.4 -1.4 V1.4 a1.4 1.4 0 0 1 1.4 -1.4z" fill="#f1f5fa"/><path d="M7.2 1.6 V4.9 H10.5z" fill="#111215"/><rect x="1.5" y="7.5" width="9.3" height="1.25" fill="#25262a"/><rect x="1.5" y="10.6" width="7.2" height="1.25" fill="#25262a"/></svg>
<div class="t s" id="t40" style="left:82.01px;top:885.00px;font-size:12.5px;line-height:19px;color:#f4f4f4;letter-spacing:0.027px;">CMakeLists.txt</div>
<svg style="left:66.5px;top:914.1px" width="8" height="8.4" viewBox="0 0 8 8.4"><path d="M4 4.2 L4 0.3 M4 4.2 L7.70912 2.99483 M4 4.2 L6.29236 7.35517 M4 4.2 L1.70764 7.35517 M4 4.2 L0.29088 2.99483 " stroke="#b4b8bd" stroke-width=".85" fill="none"/></svg>
<div class="t s" id="t41" style="left:80.42px;top:910.00px;font-size:12.5px;line-height:19px;color:#f4f4f4;transform:scaleX(0.8867);transform-origin:0 0;">LICENSE</div>
<svg style="left:64.9px;top:937.9px" width="18.3" height="11.5" viewBox="0 0 18.3 11.5"><rect x="0" y="0" width="18.3" height="11.5" rx="1.6" fill="#f1f5fa"/><path d="M2.9 9.3 V2.6 L5.95 6.3 L9.0 2.6 V9.3" fill="none" stroke="#111215" stroke-width="1.75" stroke-linejoin="miter"/><path d="M13.9 2.3 V6.4" stroke="#111215" stroke-width="1.7" fill="none"/><path d="M10.8 5.7 H17 L13.9 9.6z" fill="#111215"/></svg>
<div class="t s" id="t42" style="left:87.19px;top:935.00px;font-size:12.5px;line-height:19px;color:#f4f4f4;letter-spacing:-0.411px;">README.md</div>
<svg style="left:64.9px;top:962.2px" width="18.3" height="13.2" viewBox="0 0 18.3 13.2"><path d="M2 0 H17 a1.3 1.3 0 0 1 1.3 1.3 V10.6 L15.6 13.2 H1.3 a1.3 1.3 0 0 1 -1.3 -1.3 V2z" fill="#f1f5fa"/><ellipse cx="6.7" cy="6.2" rx="2.35" ry="3.5" fill="none" stroke="#202124" stroke-width="1.15"/><path d="M7.3 9.2 L8.9 11.2" stroke="#202124" stroke-width="1.15" fill="none"/><path d="M12.4 2.8 V8.9 a.9 .9 0 0 0 .9 .9 H14.4 M10.7 5.1 H14.4" stroke="#202124" stroke-width="1.15" fill="none"/></svg>
<div class="t s" id="t43" style="left:87.74px;top:960.00px;font-size:12.5px;line-height:19px;color:#f4f4f4;letter-spacing:0.097px;">resources.qrc</div>
</div></div>
<div style="position:absolute;left:279.4px;top:99px;width:1701.6px;height:868.4px;overflow:hidden">
<div style="position:absolute;left:-279.4px;top:-99px;width:2001px;height:1437px">
<div class="t m" id="t44" style="left:294.20px;top:106.00px;font-size:12px;line-height:18px;color:#c0c5ce;letter-spacing:-0.016px;"><span class="c">// SPDX-FileCopyrightText: 2026, Shaun Reed &lt;shaunrd0@gmail.com&gt;</span></div>
<div class="t m" id="t45" style="left:294.20px;top:123.00px;font-size:12px;line-height:18px;color:#c0c5ce;letter-spacing:-0.016px;"><span class="c">//</span></div>
<div class="t m" id="t46" style="left:294.20px;top:140.00px;font-size:12px;line-height:18px;color:#c0c5ce;letter-spacing:-0.016px;"><span class="c">// SPDX-License-Identifier: GNU General Public License v3.0 or later</span></div>
<div class="t m" id="t47" style="left:294.20px;top:174.00px;font-size:12px;line-height:18px;color:#c0c5ce;letter-spacing:-0.016px;"><span class="k">use</span> cxx_qt_lib::{QModelIndex, QString};</div>
<div class="t m" id="t48" style="left:294.20px;top:191.00px;font-size:12px;line-height:18px;color:#c0c5ce;letter-spacing:-0.016px;"><span class="k">use</span> devicons::FileIcon;</div>
<div class="t m" id="t49" style="left:294.20px;top:208.00px;font-size:12px;line-height:18px;color:#c0c5ce;letter-spacing:-0.016px;"><span class="k">use</span> dirs;</div>
<div class="t m" id="t50" style="left:294.20px;top:225.00px;font-size:12px;line-height:18px;color:#c0c5ce;letter-spacing:-0.016px;"><span class="k">use</span> log::warn;</div>
<div class="t m" id="t51" style="left:294.20px;top:242.00px;font-size:12px;line-height:18px;color:#c0c5ce;letter-spacing:-0.016px;"><span class="k">use</span> std::fs;</div>
<div class="t m" id="t52" style="left:294.20px;top:259.00px;font-size:12px;line-height:18px;color:#c0c5ce;letter-spacing:-0.016px;"><span class="k">use</span> std::path::Path;</div>
<div class="t m" id="t53" style="left:294.20px;top:276.00px;font-size:12px;line-height:18px;color:#c0c5ce;letter-spacing:-0.016px;"><span class="k">use</span> syntect::easy::HighlightLines;</div>
<div class="t m" id="t54" style="left:294.20px;top:293.00px;font-size:12px;line-height:18px;color:#c0c5ce;letter-spacing:-0.016px;"><span class="k">use</span> syntect::highlighting::ThemeSet;</div>
<div class="t m" id="t55" style="left:294.20px;top:310.00px;font-size:12px;line-height:18px;color:#c0c5ce;letter-spacing:-0.016px;"><span class="k">use</span> syntect::html::{IncludeBackground, append_highlighted_html_for_styled_line};</div>
<div class="t m" id="t56" style="left:294.20px;top:327.00px;font-size:12px;line-height:18px;color:#c0c5ce;letter-spacing:-0.016px;"><span class="k">use</span> syntect::parsing::SyntaxSet;</div>
<div class="t m" id="t57" style="left:294.20px;top:344.00px;font-size:12px;line-height:18px;color:#c0c5ce;letter-spacing:-0.016px;"><span class="k">use</span> syntect::util::LinesWithEndings;</div>
<div class="t m" id="t58" style="left:294.20px;top:378.00px;font-size:12px;line-height:18px;color:#c0c5ce;letter-spacing:-0.016px;">#[<span class="r">cxx_qt</span>::<span class="r">bridge</span>]</div>
<div class="t m" id="t59" style="left:294.20px;top:395.00px;font-size:12px;line-height:18px;color:#c0c5ce;letter-spacing:-0.016px;"><span class="k">pub</span> <span class="k">mod</span> qobject {</div>
<div class="t m" id="t60" style="left:294.20px;top:412.00px;font-size:12px;line-height:18px;color:#c0c5ce;letter-spacing:-0.016px;">    <span class="k">unsafe</span> <span class="k">extern</span> "<span class="g">C++</span>" {</div>
<div class="t m" id="t61" style="left:294.20px;top:429.00px;font-size:12px;line-height:18px;color:#c0c5ce;letter-spacing:-0.016px;">        <span class="c">// Import Qt Types from C++</span></div>
<div class="t m" id="t62" style="left:294.20px;top:446.00px;font-size:12px;line-height:18px;color:#c0c5ce;letter-spacing:-0.016px;">        include!("<span class="g">cxx-qt-lib/qstring.h</span>");</div>
<div class="t m" id="t63" style="left:294.20px;top:463.00px;font-size:12px;line-height:18px;color:#c0c5ce;letter-spacing:-0.016px;">        <span class="k">type</span> QString = cxx_qt_lib::QString;</div>
<div class="t m" id="t64" style="left:294.20px;top:480.00px;font-size:12px;line-height:18px;color:#c0c5ce;letter-spacing:-0.016px;">        include!("<span class="g">cxx-qt-lib/qmodelindex.h</span>");</div>
<div class="t m" id="t65" style="left:294.20px;top:497.00px;font-size:12px;line-height:18px;color:#c0c5ce;letter-spacing:-0.016px;">        <span class="k">type</span> QModelIndex = cxx_qt_lib::QModelIndex;</div>
<div class="t m" id="t66" style="left:294.20px;top:514.00px;font-size:12px;line-height:18px;color:#c0c5ce;letter-spacing:-0.016px;">        include!(&lt;QtGui/QFileSystemModel&gt;);</div>
<div class="t m" id="t67" style="left:294.20px;top:531.00px;font-size:12px;line-height:18px;color:#c0c5ce;letter-spacing:-0.016px;">        <span class="k">type</span> QFileSystemModel;</div>
<div class="t m" id="t68" style="left:294.20px;top:548.00px;font-size:12px;line-height:18px;color:#c0c5ce;letter-spacing:-0.016px;">    }</div>
<div class="t m" id="t69" style="left:294.20px;top:582.00px;font-size:12px;line-height:18px;color:#c0c5ce;letter-spacing:-0.016px;">    <span class="k">unsafe</span> <span class="k">extern</span> "<span class="g">RustQt</span>" {</div>
<div class="t m" id="t70" style="left:294.20px;top:599.00px;font-size:12px;line-height:18px;color:#c0c5ce;letter-spacing:-0.016px;">        <span class="c">// Export QML Types from Rust</span></div>
<div class="t m" id="t71" style="left:294.20px;top:616.00px;font-size:12px;line-height:18px;color:#c0c5ce;letter-spacing:-0.016px;">        #[<span class="r">qobject</span>]</div>
<div class="t m" id="t72" style="left:294.20px;top:633.00px;font-size:12px;line-height:18px;color:#c0c5ce;letter-spacing:-0.016px;">        #[<span class="r">base</span> = <span class="r">QFileSystemModel</span>]</div>
<div class="t m" id="t73" style="left:294.20px;top:650.00px;font-size:12px;line-height:18px;color:#c0c5ce;letter-spacing:-0.016px;">        #[<span class="r">qml_element</span>]</div>
<div class="t m" id="t74" style="left:294.20px;top:667.00px;font-size:12px;line-height:18px;color:#c0c5ce;letter-spacing:-0.016px;">        #[<span class="r">qml_singleton</span>]</div>
<div class="t m" id="t75" style="left:294.20px;top:684.00px;font-size:12px;line-height:18px;color:#c0c5ce;letter-spacing:-0.016px;">        #[<span class="r">qproperty</span>(QString, file_path, cxx_name = "<span class="g">filePath</span>")]</div>
<div class="t m" id="t76" style="left:294.20px;top:701.00px;font-size:12px;line-height:18px;color:#c0c5ce;letter-spacing:-0.016px;">        <span class="k">type</span> FileSystem = <span class="r">super</span>::FileSystemImpl;</div>
<div class="t m" id="t77" style="left:294.20px;top:735.00px;font-size:12px;line-height:18px;color:#c0c5ce;letter-spacing:-0.016px;">        #[<span class="r">inherit</span>]</div>
<div class="t m" id="t78" style="left:294.20px;top:752.00px;font-size:12px;line-height:18px;color:#c0c5ce;letter-spacing:-0.016px;">        #[<span class="r">cxx_name</span> = "<span class="g">setRootPath</span>"]</div>
<div class="t m" id="t79" style="left:294.20px;top:769.00px;font-size:12px;line-height:18px;color:#c0c5ce;letter-spacing:-0.016px;">        <span class="k">fn</span> <span class="f">set_root_path</span>(<span class="r">self</span>: Pin&lt;&amp;<span class="k">mut</span> FileSystem&gt;, <span class="r">path</span>: &amp;QString) -&gt; QModelIndex;</div>
<div class="t m" id="t80" style="left:294.20px;top:803.00px;font-size:12px;line-height:18px;color:#c0c5ce;letter-spacing:-0.016px;">        #[<span class="r">qinvokable</span>]</div>
<div class="t m" id="t81" style="left:294.20px;top:820.00px;font-size:12px;line-height:18px;color:#c0c5ce;letter-spacing:-0.016px;">        #[<span class="r">cxx_override</span>]</div>
<div class="t m" id="t82" style="left:294.20px;top:837.00px;font-size:12px;line-height:18px;color:#c0c5ce;letter-spacing:-0.016px;">        #[<span class="r">cxx_name</span> = "<span class="g">columnCount</span>"]</div>
<div class="t m" id="t83" style="left:294.20px;top:854.00px;font-size:12px;line-height:18px;color:#c0c5ce;letter-spacing:-0.016px;">        <span class="k">fn</span> <span class="f">column_count</span>(<span class="r">self</span>: &amp;FileSystem, <span class="r">_index</span>: &amp;QModelIndex) -&gt; <span class="k">i32</span>;</div>
<div class="t m" id="t84" style="left:294.20px;top:888.00px;font-size:12px;line-height:18px;color:#c0c5ce;letter-spacing:-0.016px;">        #[<span class="r">qinvokable</span>]</div>
<div class="t m" id="t85" style="left:294.20px;top:905.00px;font-size:12px;line-height:18px;color:#c0c5ce;letter-spacing:-0.016px;">        #[<span class="r">cxx_name</span> = "<span class="g">readFile</span>"]</div>
<div class="t m" id="t86" style="left:294.20px;top:922.00px;font-size:12px;line-height:18px;color:#c0c5ce;letter-spacing:-0.016px;">        <span class="k">fn</span> <span class="f">read_file</span>(<span class="r">self</span>: &amp;FileSystem, <span class="r">path</span>: &amp;QString) -&gt; QString;</div>
<div class="t m" id="t87" style="left:294.20px;top:956.00px;font-size:12px;line-height:18px;color:#c0c5ce;letter-spacing:-0.016px;">        #[<span class="r">qinvokable</span>]</div>
<div class="t m" id="t88" style="left:294.20px;top:973.00px;font-size:12px;line-height:18px;color:#c0c5ce;letter-spacing:-0.016px;">        #[<span class="r">cxx_name</span> = "<span class="g">setDirectory</span>"]</div>
</div></div>
<div style="position:absolute;left:248px;top:99px;width:30px;height:882px;overflow:hidden">
<div style="position:absolute;left:-248px;top:-99px;width:2001px;height:1437px">
<div class="t s" id="t89" style="left:248.02px;top:105.00px;font-size:12.5px;line-height:19px;color:#a4a8ad;">1</div>
<div class="t s" id="t90" style="left:248.21px;top:122.00px;font-size:12.5px;line-height:19px;color:#a4a8ad;">2</div>
<div class="t s" id="t91" style="left:248.05px;top:139.00px;font-size:12.5px;line-height:19px;color:#a4a8ad;">3</div>
<div class="t s" id="t92" style="left:248.82px;top:156.00px;font-size:12.5px;line-height:19px;color:#a4a8ad;">4</div>
<div class="t s" id="t93" style="left:248.03px;top:173.00px;font-size:12.5px;line-height:19px;color:#a4a8ad;">5</div>
<div class="t s" id="t94" style="left:248.16px;top:190.00px;font-size:12.5px;line-height:19px;color:#a4a8ad;">6</div>
<div class="t s" id="t95" style="left:248.21px;top:207.00px;font-size:12.5px;line-height:19px;color:#a4a8ad;">7</div>
<div class="t s" id="t96" style="left:248.83px;top:224.00px;font-size:12.5px;line-height:19px;color:#a4a8ad;">8</div>
<div class="t s" id="t97" style="left:248.04px;top:241.00px;font-size:12.5px;line-height:19px;color:#a4a8ad;">9</div>
<div class="t s" id="t98" style="left:247.96px;top:258.00px;font-size:12.5px;line-height:19px;color:#a4a8ad;">10</div>
<div class="t s" id="t99" style="left:247.96px;top:275.00px;font-size:12.5px;line-height:19px;color:#a4a8ad;">11</div>
<div class="t s" id="t100" style="left:247.96px;top:292.00px;font-size:12.5px;line-height:19px;color:#a4a8ad;">12</div>
<div class="t s" id="t101" style="left:247.96px;top:309.00px;font-size:12.5px;line-height:19px;color:#a4a8ad;">13</div>
<div class="t s" id="t102" style="left:247.96px;top:326.00px;font-size:12.5px;line-height:19px;color:#a4a8ad;">14</div>
<div class="t s" id="t103" style="left:247.96px;top:343.00px;font-size:12.5px;line-height:19px;color:#a4a8ad;">15</div>
<div class="t s" id="t104" style="left:247.96px;top:360.00px;font-size:12.5px;line-height:19px;color:#a4a8ad;">16</div>
<div class="t s" id="t105" style="left:247.96px;top:377.00px;font-size:12.5px;line-height:19px;color:#a4a8ad;">17</div>
<div class="t s" id="t106" style="left:247.96px;top:394.00px;font-size:12.5px;line-height:19px;color:#a4a8ad;">18</div>
<div class="t s" id="t107" style="left:247.96px;top:411.00px;font-size:12.5px;line-height:19px;color:#a4a8ad;">19</div>
<div class="t s" id="t108" style="left:248.21px;top:428.00px;font-size:12.5px;line-height:19px;color:#a4a8ad;">20</div>
<div class="t s" id="t109" style="left:248.21px;top:445.00px;font-size:12.5px;line-height:19px;color:#a4a8ad;">21</div>
<div class="t s" id="t110" style="left:248.21px;top:462.00px;font-size:12.5px;line-height:19px;color:#a4a8ad;">22</div>
<div class="t s" id="t111" style="left:248.21px;top:479.00px;font-size:12.5px;line-height:19px;color:#a4a8ad;">23</div>
<div class="t s" id="t112" style="left:248.21px;top:496.00px;font-size:12.5px;line-height:19px;color:#a4a8ad;">24</div>
<div class="t s" id="t113" style="left:248.21px;top:513.00px;font-size:12.5px;line-height:19px;color:#a4a8ad;">25</div>
<div class="t s" id="t114" style="left:248.21px;top:530.00px;font-size:12.5px;line-height:19px;color:#a4a8ad;">26</div>
<div class="t s" id="t115" style="left:248.21px;top:547.00px;font-size:12.5px;line-height:19px;color:#a4a8ad;">27</div>
<div class="t s" id="t116" style="left:248.21px;top:564.00px;font-size:12.5px;line-height:19px;color:#a4a8ad;">28</div>
<div class="t s" id="t117" style="left:248.21px;top:581.00px;font-size:12.5px;line-height:19px;color:#a4a8ad;">29</div>
<div class="t s" id="t118" style="left:248.05px;top:598.00px;font-size:12.5px;line-height:19px;color:#a4a8ad;">30</div>
<div class="t s" id="t119" style="left:248.05px;top:615.00px;font-size:12.5px;line-height:19px;color:#a4a8ad;">31</div>
<div class="t s" id="t120" style="left:248.05px;top:632.00px;font-size:12.5px;line-height:19px;color:#a4a8ad;">32</div>
<div class="t s" id="t121" style="left:248.05px;top:649.00px;font-size:12.5px;line-height:19px;color:#a4a8ad;">33</div>
<div class="t s" id="t122" style="left:248.05px;top:666.00px;font-size:12.5px;line-height:19px;color:#a4a8ad;">34</div>
<div class="t s" id="t123" style="left:248.05px;top:683.00px;font-size:12.5px;line-height:19px;color:#a4a8ad;">35</div>
<div class="t s" id="t124" style="left:248.05px;top:700.00px;font-size:12.5px;line-height:19px;color:#a4a8ad;">36</div>
<div class="t s" id="t125" style="left:248.05px;top:717.00px;font-size:12.5px;line-height:19px;color:#a4a8ad;">37</div>
<div class="t s" id="t126" style="left:248.05px;top:734.00px;font-size:12.5px;line-height:19px;color:#a4a8ad;">38</div>
<div class="t s" id="t127" style="left:248.05px;top:751.00px;font-size:12.5px;line-height:19px;color:#a4a8ad;">39</div>
<div class="t s" id="t128" style="left:248.82px;top:768.00px;font-size:12.5px;line-height:19px;color:#a4a8ad;">40</div>
<div class="t s" id="t129" style="left:248.82px;top:785.00px;font-size:12.5px;line-height:19px;color:#a4a8ad;">41</div>
<div class="t s" id="t130" style="left:248.82px;top:802.00px;font-size:12.5px;line-height:19px;color:#a4a8ad;">42</div>
<div class="t s" id="t131" style="left:248.82px;top:819.00px;font-size:12.5px;line-height:19px;color:#a4a8ad;">43</div>
<div class="t s" id="t132" style="left:248.82px;top:836.00px;font-size:12.5px;line-height:19px;color:#a4a8ad;">44</div>
<div class="t s" id="t133" style="left:248.82px;top:853.00px;font-size:12.5px;line-height:19px;color:#a4a8ad;">45</div>
<div class="t s" id="t134" style="left:248.82px;top:870.00px;font-size:12.5px;line-height:19px;color:#a4a8ad;">46</div>
<div class="t s" id="t135" style="left:248.82px;top:887.00px;font-size:12.5px;line-height:19px;color:#a4a8ad;">47</div>
<div class="t s" id="t136" style="left:248.82px;top:904.00px;font-size:12.5px;line-height:19px;color:#a4a8ad;">48</div>
<div class="t s" id="t137" style="left:248.82px;top:921.00px;font-size:12.5px;line-height:19px;color:#a4a8ad;">49</div>
<div class="t s" id="t138" style="left:248.03px;top:938.00px;font-size:12.5px;line-height:19px;color:#a4a8ad;">50</div>
<div class="t s" id="t139" style="left:248.03px;top:955.00px;font-size:12.5px;line-height:19px;color:#a4a8ad;">51</div>
<div class="t s" id="t140" style="left:248.03px;top:972.00px;font-size:12.5px;line-height:19px;color:#a4a8ad;">52</div>
</div></div>
<div class="t m" id="t141" style="left:248.60px;top:982.00px;font-size:12px;line-height:18px;color:#dffbff;letter-spacing:-0.016px;">[INFO] Info logs</div>
<div class="t m" id="t142" style="left:248.60px;top:999.00px;font-size:12px;line-height:18px;color:#bca765;letter-spacing:-0.016px;">[WARN] Warning logs</div>
<div class="t m" id="t143" style="left:248.60px;top:1016.00px;font-size:12px;line-height:18px;color:#9a5bd0;letter-spacing:-0.016px;">[DEBUG] Debug logs</div>
<div class="t m" id="t144" style="left:248.60px;top:1033.00px;font-size:12px;line-height:18px;color:#ff5a5a;letter-spacing:-0.016px;">[ERROR] Error logs</div>
<div class="t m" id="t145" style="left:248.60px;top:1050.00px;font-size:12px;line-height:18px;color:#f2a31d;letter-spacing:-0.016px;">[TRACE] Trace logs</div>
<div class="t m" id="t146" style="left:248.60px;top:1067.00px;font-size:12px;line-height:18px;color:#f2a31d;letter-spacing:-0.016px;">[TRACE] Building segments for path: /home/shaun/Code/clide</div>
<div class="t m" id="t147" style="left:248.60px;top:1084.00px;font-size:12px;line-height:18px;color:#f2a31d;letter-spacing:-0.016px;">[TRACE] Pushing path: home Current: /home</div>
<div class="t m" id="t148" style="left:248.60px;top:1101.00px;font-size:12px;line-height:18px;color:#f2a31d;letter-spacing:-0.016px;">[TRACE] Pushing path: shaun Current: /home/shaun</div>
<div class="t m" id="t149" style="left:248.60px;top:1118.00px;font-size:12px;line-height:18px;color:#f2a31d;letter-spacing:-0.016px;">[TRACE] Pushing path: Code Current: /home/shaun/Code</div>
<div class="t m" id="t150" style="left:248.60px;top:1135.00px;font-size:12px;line-height:18px;color:#f2a31d;letter-spacing:-0.016px;">[TRACE] Pushing path: clide Current: /home/shaun/Code/clide</div>
<div class="t m" id="t151" style="left:248.60px;top:1152.00px;font-size:12px;line-height:18px;color:#f2a31d;letter-spacing:-0.016px;">[TRACE] Setting editor path from ClideExplorerView signal: /home/shaun/Code/clide/src/gui/icon_provider.rs</div>
<div class="t m" id="t152" style="left:248.60px;top:1169.00px;font-size:12px;line-height:18px;color:#f2a31d;letter-spacing:-0.016px;">[TRACE] Setting editor path from ClideExplorerView signal: /home/shaun/Code/clide/src/gui/filesystem.rs</div>
<div class="t m" id="t153" style="left:248.60px;top:1186.00px;font-size:12px;line-height:18px;color:#9a5bd0;letter-spacing:-0.016px;">[DEBUG] Setting active: true</div>
<div class="t m" id="t154" style="left:248.60px;top:1203.00px;font-size:12px;line-height:18px;color:#9a5bd0;letter-spacing:-0.016px;">[DEBUG] Setting active: true</div>
<div style="position:absolute;left:1273px;top:336px;width:80.2px;height:80px;background:#1b1c1f;"></div>
<div style="position:absolute;left:1273px;top:415.2px;width:80.2px;height:0.9px;background:#17181a;"></div>
<div style="position:absolute;left:1273px;top:336px;width:80.2px;height:80px;overflow:hidden">
<div style="position:absolute;left:-1273px;top:-336px;width:2001px;height:1437px">
<div class="t m" id="t155" style="left:1269.90px;top:339.00px;font-size:8.45px;line-height:13px;color:#3f9e18;">     *</div>
<div class="t m" id="t156" style="left:1269.90px;top:350.00px;font-size:8.45px;line-height:13px;color:#3f9e18;">     |.===.</div>
<div class="t m" id="t157" style="left:1269.90px;top:361.00px;font-size:8.45px;line-height:13px;color:#3f9e18;">     {}o o{}</div>
<div class="t m" id="t158" style="left:1269.90px;top:372.00px;font-size:8.45px;line-height:13px;color:#3f9e18;">--ooO--(_)--Ooo--</div>
</div></div>
<div class="t s" id="t159" style="left:1271.28px;top:442.00px;font-size:13.8px;line-height:21px;color:#cfcfcf;font-weight:700;letter-spacing:0.269px;">About CLIDE</div>
<div class="t s" id="t160" style="left:1150.78px;top:473.00px;font-size:13.1px;line-height:20px;color:#c9c9c9;letter-spacing:-0.218px;">A simple text editor written in Rust and QML using CXX-Qt.</div>
<div class="t s" id="t161" style="left:1221.21px;top:502.00px;font-size:13.1px;line-height:20px;color:#c9c9c9;letter-spacing:-0.203px;">Personal website</div>
<div class="t s" id="t162" style="left:1319.71px;top:502.00px;font-size:13.1px;line-height:20px;color:#2a97ee;letter-spacing:-0.115px;text-decoration:underline;text-underline-offset:1.5px;">shaunreed.com</div>
<div class="t s" id="t163" style="left:1243.09px;top:531.00px;font-size:13.1px;line-height:20px;color:#c9c9c9;letter-spacing:-0.122px;">Project notes</div>
<div class="t s" id="t164" style="left:1320.36px;top:531.00px;font-size:13.1px;line-height:20px;color:#2a97ee;letter-spacing:-0.081px;text-decoration:underline;text-underline-offset:1.5px;">knoats.com</div>
<div class="t s" id="t165" style="left:1183.72px;top:560.00px;font-size:13.1px;line-height:20px;color:#c9c9c9;letter-spacing:-0.240px;">This project is developed at</div>
<div class="t s" id="t166" style="left:1339.73px;top:560.00px;font-size:13.1px;line-height:20px;color:#2a97ee;letter-spacing:-0.069px;text-decoration:underline;text-underline-offset:1.5px;">git.shaunreed.com</div>
<div class="t s" id="t167" style="left:1246.79px;top:589.00px;font-size:13.1px;line-height:20px;color:#2a97ee;letter-spacing:-0.489px;text-decoration:underline;text-underline-offset:1.5px;">KDAB CXX-Qt repository</div>
<div class="t s" id="t168" style="left:1172.30px;top:618.00px;font-size:13.1px;line-height:20px;color:#c9c9c9;letter-spacing:-0.313px;">Copyright (C) 2026 Shaun Reed, all rights reserved.</div>
</body></html>
